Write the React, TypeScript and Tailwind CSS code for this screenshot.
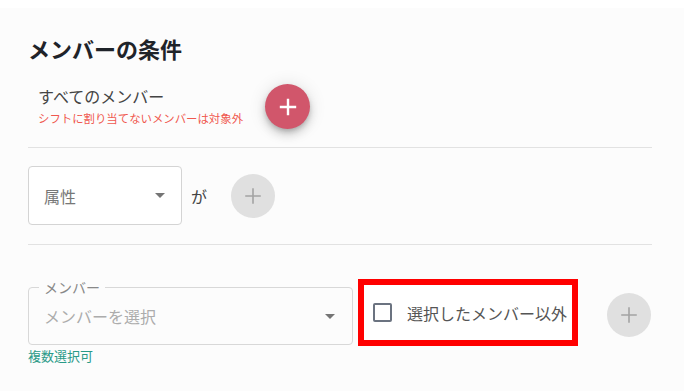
import React from 'react';

const PlusIcon: React.FC<{ color: string; stroke: number }> = ({ color, stroke }) => (
  <svg width="18" height="18" viewBox="0 0 18 18">
    <path d="M9 2v14M2 9h14" stroke={color} strokeWidth={stroke} strokeLinecap="square" />
  </svg>
);

const Caret: React.FC = () => (
  <svg width="10" height="5" viewBox="0 0 10 5">
    <path d="M0 0h10L5 5z" fill="#757575" />
  </svg>
);

const GrayAdd: React.FC = () => (
  <button className="w-[44px] h-[44px] rounded-full bg-[#e0e0e0] flex items-center justify-center shrink-0">
    <PlusIcon color="#a3a3a3" stroke={1.6} />
  </button>
);

const App: React.FC = () => {
  return (
    <div
      className="w-[684px] h-[391px] bg-white pt-[8px] overflow-hidden"
      style={{ fontFamily: '"Noto Sans CJK JP", "Noto Sans", sans-serif' }}
    >
      <div className="h-full bg-[#fcfcfc] pl-[28px] pr-[32px]">
        {/* Title */}
        <h2 className="pt-[24px] text-[22px] leading-[32px] font-bold text-[#1f2329]">メンバーの条件</h2>

        {/* All members */}
        <div className="mt-[18px] h-[50px] flex items-start gap-[22px] pl-[10px]">
          <div className="mt-[3px] flex flex-col">
            <span className="text-[16px] leading-[22px] text-[#444]">すべてのメンバー</span>
            <span className="mt-[3px] text-[11.4px] leading-[16px] text-[#f0584f]">シフトに割り当てないメンバーは対象外</span>
          </div>
          <button className="mt-[2px] w-[45px] h-[45px] rounded-full bg-[#d1566b] flex items-center justify-center shadow-[0_3px_5px_-1px_rgba(0,0,0,0.2),0_6px_10px_0_rgba(0,0,0,0.14),0_1px_18px_0_rgba(0,0,0,0.12)]">
            <PlusIcon color="#ffffff" stroke={2.4} />
          </button>
        </div>

        <div className="mt-[15px] h-px bg-[#e2e2e2]" />

        {/* Attribute row */}
        <div className="mt-[18px] flex items-center">
          <div className="w-[154px] h-[59px] border border-[#d4d4d4] rounded-[4px] bg-white flex items-center justify-between pl-[15px] pr-[16px]">
            <span className="text-[16px] text-[#777]">属性</span>
            <Caret />
          </div>
          <span className="ml-[9px] text-[16px] text-[#444]">が</span>
          <div className="ml-[24px]">
            <GrayAdd />
          </div>
        </div>

        <div className="mt-[19px] h-px bg-[#e2e2e2]" />

        {/* Member row */}
        <div className="mt-[34px] flex items-start">
          <div className="mt-[8px] w-[325px]">
            <div className="relative h-[58px] border border-[#d8d8d8] rounded-[4px] flex items-center justify-between pl-[15px] pr-[17px]">
              <span className="absolute left-[10px] top-[-10px] px-[5px] bg-[#fcfcfc] text-[14px] leading-[18px] text-[#888]">メンバー</span>
              <span className="text-[16px] text-[#acacac]">メンバーを選択</span>
              <Caret />
            </div>
            <div className="mt-[3px] text-[13px] leading-[16px] text-[#2a9a88]">複数選択可</div>
          </div>
          <div className="ml-[5px] w-[220px] h-[67px] border-[6px] border-[#ff0000] bg-white flex items-center pl-[9px] gap-[15px]">
            <span className="w-[19px] h-[19px] border-2 border-[#6b7380] rounded-[2px] bg-white" />
            <span className="text-[16px] text-[#555]">選択したメンバー以外</span>
          </div>
          <div className="mt-[14px] ml-[29px]">
            <GrayAdd />
          </div>
        </div>
      </div>
    </div>
  );
};

export default App;
